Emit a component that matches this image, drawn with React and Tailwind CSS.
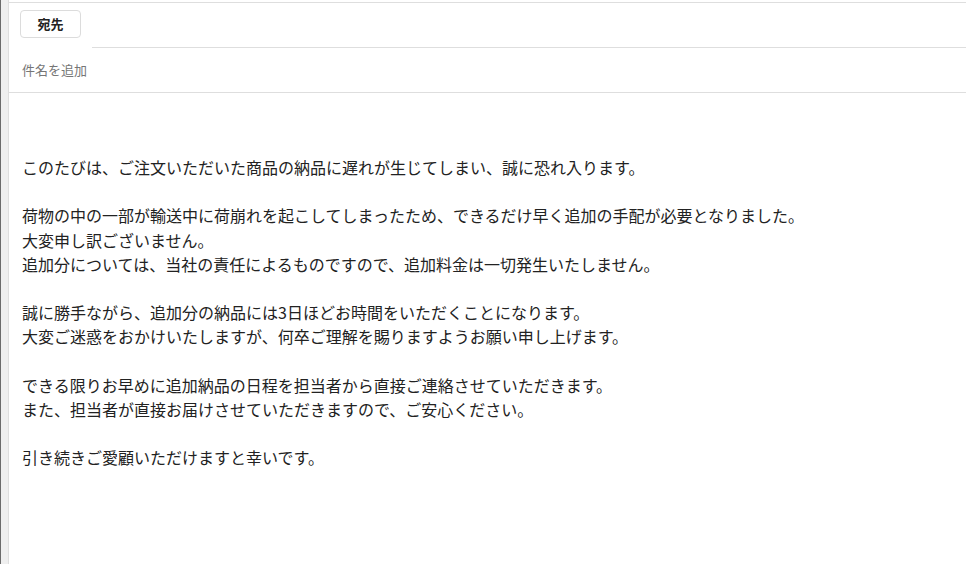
import React from 'react';

const body = [
  "このたびは、ご注文いただいた商品の納品に遅れが生じてしまい、誠に恐れ入ります。",
  "",
  "荷物の中の一部が輸送中に荷崩れを起こしてしまったため、できるだけ早く追加の手配が必要となりました。",
  "大変申し訳ございません。",
  "追加分については、当社の責任によるものですので、追加料金は一切発生いたしません。",
  "",
  "誠に勝手ながら、追加分の納品には3日ほどお時間をいただくことになります。",
  "大変ご迷惑をおかけいたしますが、何卒ご理解を賜りますようお願い申し上げます。",
  "",
  "できる限りお早めに追加納品の日程を担当者から直接ご連絡させていただきます。",
  "また、担当者が直接お届けさせていただきますので、ご安心ください。",
  "",
  "引き続きご愛顧いただけますと幸いです。",
];

function App() {
  return (
    <div
      className="h-screen w-full flex bg-white overflow-hidden"
      style={{ fontFamily: '"Noto Sans CJK JP", "Noto Sans", sans-serif' }}
    >
      <div className="w-[9px] shrink-0 bg-[#efefef] border-l border-[#6b6b6b] border-r border-r-[#dedede]" />
      <div className="flex-1 flex flex-col pt-[2px]">
        <div className="border-t border-[#dedede] flex h-[46px]">
          <button className="ml-[11px] mt-[7px] w-[61px] h-[28px] rounded-[4px] border border-[#dcdcdc] bg-white text-[13px] font-semibold text-[#222] flex items-center justify-center">
            宛先
          </button>
          <div className="flex-1 ml-[11px] border-b border-[#dedede]" />
        </div>
        <div className="h-[45px] border-b border-[#dedede] flex items-center pl-[13px] text-[13px] text-[#767676]">
          件名を追加
        </div>
        <div className="pt-[62px] pl-[13px] text-[16px] leading-[24.2px] text-[#222]">
          {body.map((line, i) => (
            <div key={i} className="h-[24.2px] whitespace-nowrap">{line}</div>
          ))}
        </div>
      </div>
    </div>
  );
}

export default App;
